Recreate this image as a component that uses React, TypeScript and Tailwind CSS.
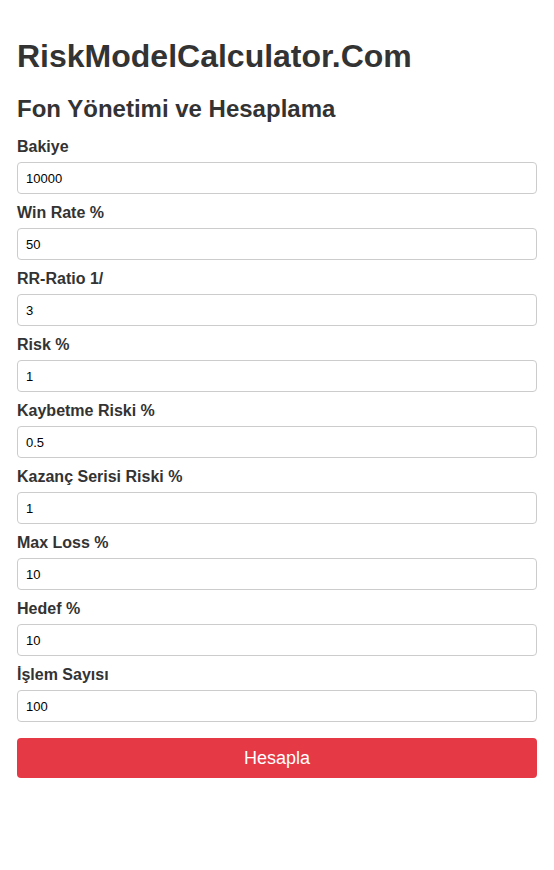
const fields: { label: string; value: string }[] = [
  { label: "Bakiye", value: "10000" },
  { label: "Win Rate %", value: "50" },
  { label: "RR-Ratio 1/", value: "3" },
  { label: "Risk %", value: "1" },
  { label: "Kaybetme Riski %", value: "0.5" },
  { label: "Kazanç Serisi Riski %", value: "1" },
  { label: "Max Loss %", value: "10" },
  { label: "Hedef %", value: "10" },
  { label: "İşlem Sayısı", value: "100" },
];

export default function App() {
  return (
    <div className="min-h-screen bg-white px-[17px] pt-[38px] font-['Liberation_Sans',Arial,sans-serif] text-[#333]">
      <h1 className="text-[32px] font-bold leading-[37px]">RiskModelCalculator.Com</h1>
      <h2 className="mt-[20px] text-[24px] font-bold leading-[28px]">Fon Yönetimi ve Hesaplama</h2>

      <form className="mt-[15px]" onSubmit={(e) => e.preventDefault()}>
        {fields.map((f) => (
          <div key={f.label} className="mb-[10px]">
            <label className="block text-[16px] font-bold leading-[18px]">{f.label}</label>
            <input
              type="text"
              defaultValue={f.value}
              className="mt-[6px] block h-[32px] w-full rounded-[4px] border border-[#ccc] px-[8px] text-[13px] text-black outline-none"
            />
          </div>
        ))}
        <button
          type="submit"
          className="mt-[6px] h-[40px] w-full rounded-[4px] bg-[#e63946] text-[18px] text-white"
        >
          Hesapla
        </button>
      </form>
    </div>
  );
}
